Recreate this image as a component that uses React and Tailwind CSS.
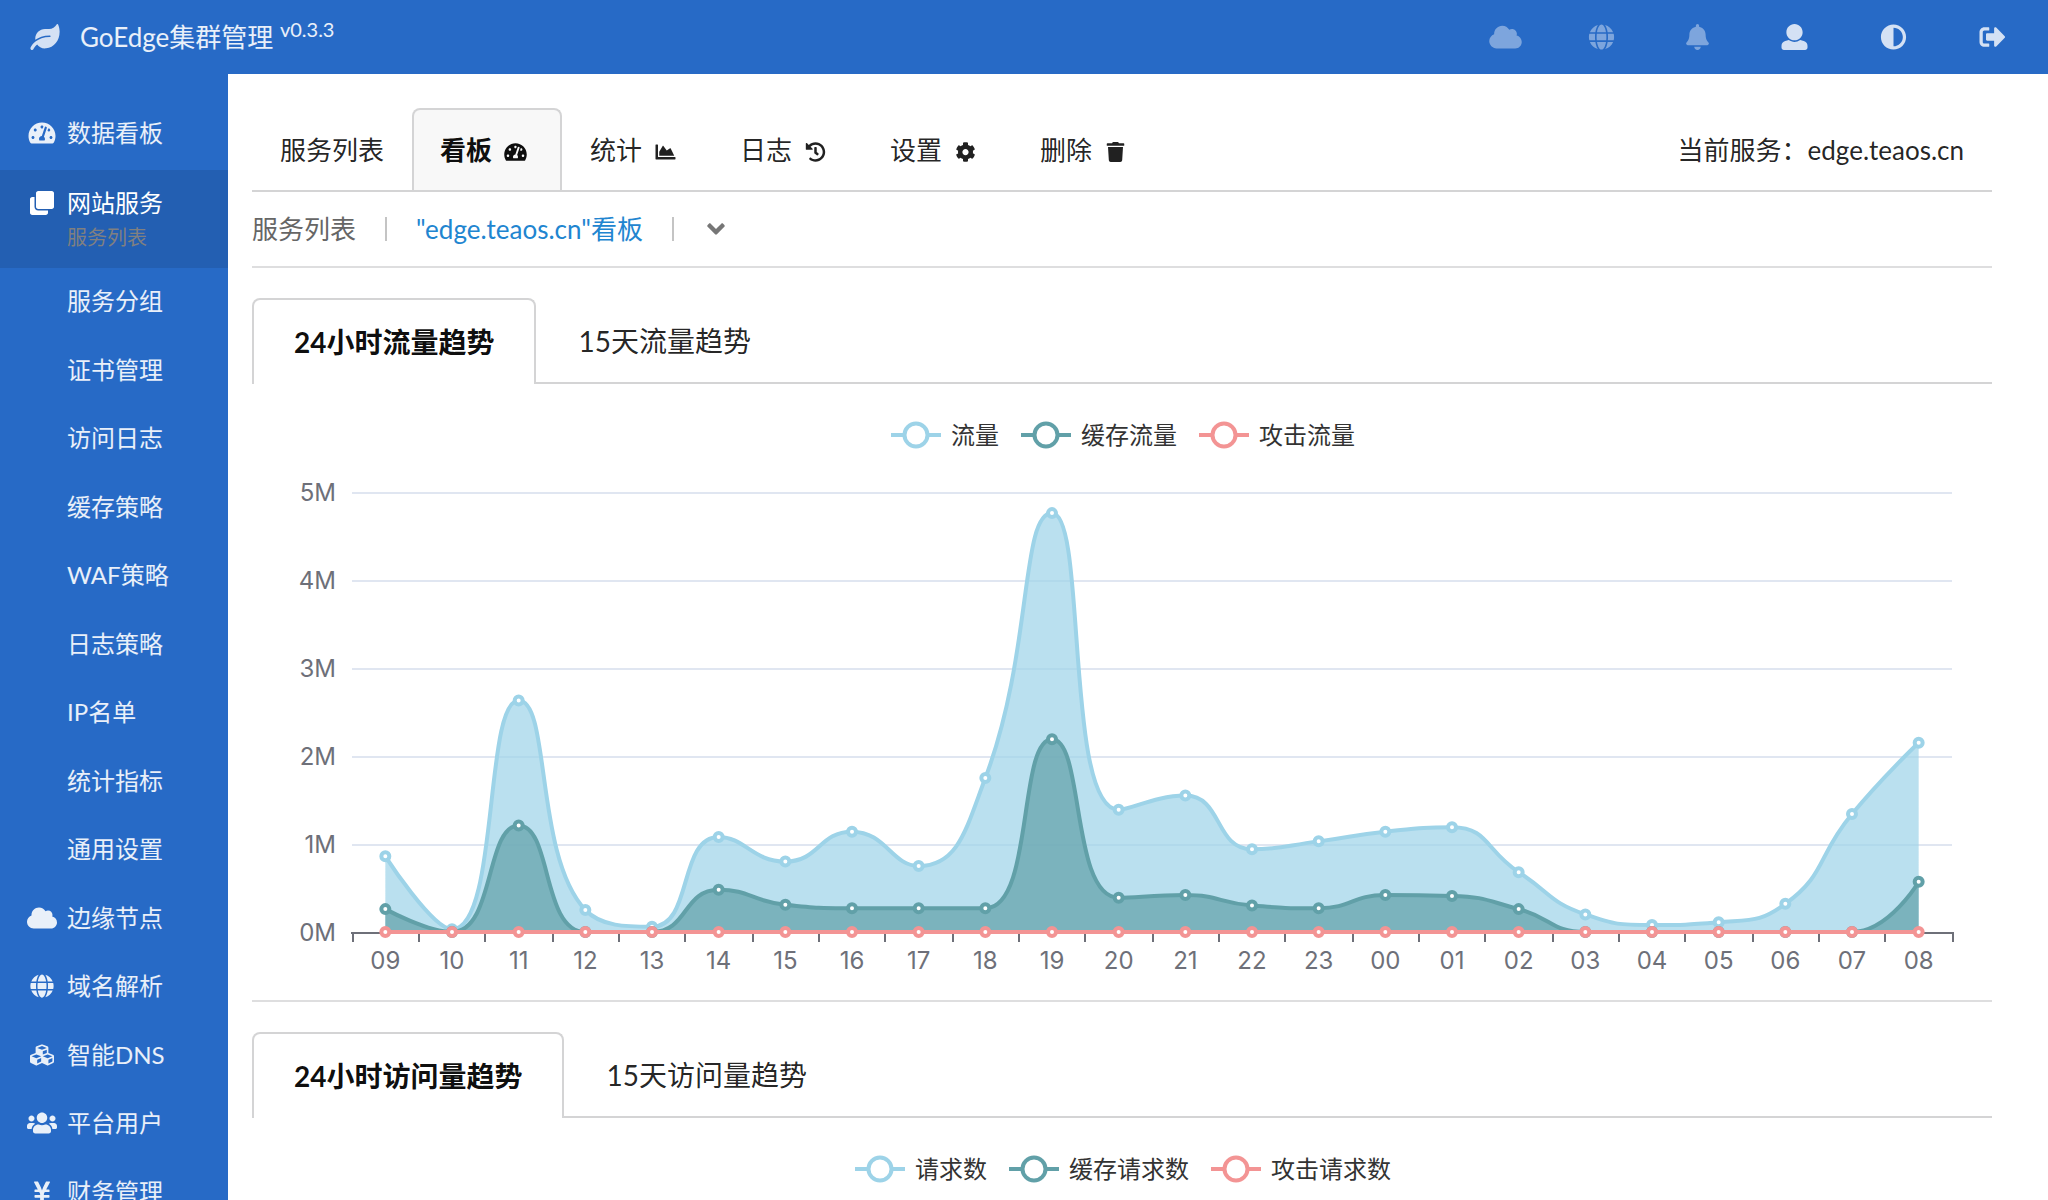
import {
  FaAdjust,
  FaAngleDown,
  FaBell,
  FaChartArea,
  FaClone,
  FaCloud,
  FaCog,
  FaCubes,
  FaGlobe,
  FaHistory,
  FaLeaf,
  FaSignOutAlt,
  FaTachometerAlt,
  FaTrash,
  FaUsers,
  FaYenSign,
} from "react-icons/fa";

const SERVICE_MENU = [
  "服务分组",
  "证书管理",
  "访问日志",
  "缓存策略",
  "WAF策略",
  "日志策略",
  "IP名单",
  "统计指标",
  "通用设置",
];

const MODULES = [
  { label: "边缘节点", icon: FaCloud },
  { label: "域名解析", icon: FaGlobe },
  { label: "智能DNS", icon: FaCubes },
  { label: "平台用户", icon: FaUsers },
  { label: "财务管理", icon: FaYenSign },
];

const TABS = [
  { label: "服务列表" },
  { label: "看板", icon: FaTachometerAlt, active: true },
  { label: "统计", icon: FaChartArea },
  { label: "日志", icon: FaHistory },
  { label: "设置", icon: FaCog },
  { label: "删除", icon: FaTrash },
];

const COLORS = ["#9dd3e8", "#61a0a8", "#f39494"];

const HOURS = [
  "09", "10", "11", "12", "13", "14", "15", "16", "17", "18", "19", "20",
  "21", "22", "23", "00", "01", "02", "03", "04", "05", "06", "07", "08",
];

// Values in M
const TRAFFIC = [
  0.86, 0.03, 2.63, 0.25, 0.06, 1.08, 0.8, 1.14, 0.75, 1.75, 4.76, 1.39,
  1.55, 0.94, 1.03, 1.14, 1.19, 0.68, 0.2, 0.08, 0.11, 0.32, 1.34, 2.15,
];
const CACHED = [
  0.26, 0, 1.21, 0, 0, 0.48, 0.31, 0.27, 0.27, 0.27, 2.19, 0.39,
  0.42, 0.3, 0.27, 0.42, 0.41, 0.26, 0, 0, 0, 0, 0, 0.57,
];
const ATTACKS = HOURS.map(() => 0);

const PLOT = { left: 100, right: 1700, top: 37, bottom: 477, max: 5 };

const clamp = (v, a, b) => Math.max(Math.min(v, Math.max(a, b)), Math.min(a, b));

function toPoints(values) {
  const step = (PLOT.right - PLOT.left) / values.length;
  const unit = (PLOT.bottom - PLOT.top) / PLOT.max;
  return values.map((v, i) => [PLOT.left + step * (i + 0.5), PLOT.bottom - 1 - v * unit]);
}

// Bezier smoothing that never overshoots the neighbouring points
function smoothPath(points, smooth = 0.5) {
  let [cx, cy] = points[0];
  let d = `M${cx},${cy}`;
  for (let i = 1; i < points.length; i++) {
    const [px, py] = points[i - 1];
    const [x, y] = points[i];
    let c1x = x;
    let c1y = y;
    let nextCx = x;
    let nextCy = y;
    if (i < points.length - 1) {
      const [nx, ny] = points[i + 1];
      const lenPrev = Math.hypot(x - px, y - py);
      const lenNext = Math.hypot(nx - x, ny - y);
      const ratio = lenNext / (lenNext + lenPrev);
      nextCx = clamp(x + (nx - px) * smooth * ratio, nx, x);
      nextCy = clamp(y + (ny - py) * smooth * ratio, ny, y);
      c1x = clamp(x - ((nextCx - x) * lenPrev) / lenNext, px, x);
      c1y = clamp(y - ((nextCy - y) * lenPrev) / lenNext, py, y);
      nextCx = x + ((x - c1x) * lenNext) / lenPrev;
      nextCy = y + ((y - c1y) * lenNext) / lenPrev;
    }
    d += `C${cx},${cy} ${c1x},${c1y} ${x},${y}`;
    cx = nextCx;
    cy = nextCy;
  }
  return d;
}

function UserIcon({ className }) {
  return (
    <svg viewBox="0 0 512 512" fill="currentColor" className={className} aria-hidden="true">
      <path d="M256 0c88.366 0 160 71.634 160 160s-71.634 160-160 160S96 248.366 96 160 167.634 0 256 0zm183.283 333.821l-71.313-17.828c-74.923 53.89-165.738 41.864-223.94 0l-71.313 17.828C29.981 344.505 0 382.903 0 426.955V464c0 26.51 21.49 48 48 48h416c26.51 0 48-21.49 48-48v-37.045c0-44.052-29.981-82.45-72.717-93.134z" />
    </svg>
  );
}

const HEADER_ACTIONS = [
  { label: "集群", icon: FaCloud, className: "w-24 text-white/40" },
  { label: "域名", icon: FaGlobe, className: "w-24 text-white/40" },
  { label: "消息", icon: FaBell, className: "w-24 text-white/40" },
  { label: "用户", icon: UserIcon, className: "w-[99px] text-white/80" },
  { label: "主题", icon: FaAdjust, className: "w-[99px] text-white/80" },
  { label: "退出", icon: FaSignOutAlt, className: "w-[99px] text-white/80" },
];

function Header() {
  return (
    <header className="flex h-[74px] shrink-0 items-center justify-between bg-[#276ac6] pr-1.5">
      <a href="#" className="flex items-center pl-[30px] text-white/90">
        <FaLeaf className="h-[26px] w-[30px] text-white/80" />
        <span className="ml-5 text-[26px] leading-9">
          GoEdge集群管理 <sup className="text-[20px]">v0.3.3</sup>
        </span>
      </a>
      <nav className="flex items-center">
        {HEADER_ACTIONS.map(({ label, icon: Icon, className }) => (
          <a key={label} href="#" aria-label={label} className={`flex justify-center ${className}`}>
            <Icon className="h-[26px] w-[33px]" />
          </a>
        ))}
      </nav>
    </header>
  );
}

function SidebarLink({ label, icon: Icon }) {
  return (
    <a href="#" className="flex h-full items-center text-white/90">
      <span className="mr-1 flex w-[63px] justify-center pl-5">
        {Icon && <Icon className="h-6 w-[30px] shrink-0" />}
      </span>
      {label}
    </a>
  );
}

function Sidebar() {
  return (
    <nav className="w-[228px] shrink-0 overflow-hidden bg-[#276ac6] pt-[22px] text-2xl leading-8">
      <div className="h-[74px]">
        <SidebarLink label="数据看板" icon={FaTachometerAlt} />
      </div>
      <a href="#" className="flex h-[98px] bg-[#235fb2] pt-[17px] text-white">
        <span className="mr-1 flex h-8 w-[63px] items-center justify-center pl-5">
          <FaClone className="h-6 w-[30px] shrink-0" />
        </span>
        <span>
          <span className="block">网站服务</span>
          <span className="block text-xl leading-9 text-[#808080]">服务列表</span>
        </span>
      </a>
      <ul className="-mt-px">
        {SERVICE_MENU.map((label) => (
          <li key={label} className="odd:h-[68px] even:h-[69px]">
            <SidebarLink label={label} />
          </li>
        ))}
        {MODULES.map((item) => (
          <li key={item.label} className="odd:h-[68px] even:h-[69px]">
            <SidebarLink {...item} />
          </li>
        ))}
      </ul>
    </nav>
  );
}

function MainTabs() {
  return (
    <div className="flex items-end justify-between border-b-2 border-[#d4d4d5] pt-[34px]">
      <nav className="flex">
        {TABS.map(({ label, icon: Icon, active }) => (
          <a
            key={label}
            href="#"
            className={`flex h-[82px] items-center rounded-t-lg border-2 border-b-0 px-[26px] ${
              active
                ? "border-[#d4d4d5] bg-[#f8f8f8] font-bold text-black/95"
                : "border-transparent text-black/87"
            }`}
          >
            {label}
            {Icon && (
              <span className="ml-2.5 mr-1.5 flex w-[26px] justify-center pt-1">
                <Icon className="h-5 w-[25px]" />
              </span>
            )}
          </a>
        ))}
      </nav>
      <div className="flex h-20 items-center pr-7 text-black/87">当前服务：edge.teaos.cn</div>
    </div>
  );
}

function Breadcrumb() {
  return (
    <div className="flex h-[76px] items-center border-b-2 border-[#dededf]">
      <a href="#" className="text-[#666]">服务列表</a>
      <span className="mx-[29px] h-6 w-0.5 bg-[#c4c4c4]" />
      <a href="#" className="text-[#2185d0]">"edge.teaos.cn"看板</a>
      <span className="mx-[29px] h-6 w-0.5 bg-[#c4c4c4]" />
      <button type="button" aria-label="更多" className="ml-1 text-[#767676]">
        <FaAngleDown className="h-7 w-[18px]" />
      </button>
    </div>
  );
}

function ChartTabs({ active, other }) {
  return (
    <div className="mt-[30px] flex text-[28px]">
      <button
        type="button"
        className="h-[86px] rounded-t-lg border-2 border-b-0 border-[#d4d4d5] px-10 font-bold text-black/95"
      >
        {active}
      </button>
      <div className="flex-1 border-b-2 border-[#d4d4d5] pt-0.5">
        <button type="button" className="h-full px-[42px] text-black/87">
          {other}
        </button>
      </div>
    </div>
  );
}

function Legend({ items }) {
  return (
    <ul className="mt-[30px] flex h-[42px] items-center justify-center gap-[22px] pl-0.5 text-2xl text-[#333]">
      {items.map((label, i) => (
        <li key={label} className="flex items-center gap-2.5">
          <svg viewBox="0 0 50 28" className="h-7 w-[50px]" fill="#fff" stroke={COLORS[i]} strokeWidth="4">
            <path d="M0 14h50" />
            <circle cx="25" cy="14" r="11.5" />
          </svg>
          {label}
        </li>
      ))}
    </ul>
  );
}

function TrafficChart() {
  const { left, right, top, bottom, max } = PLOT;
  const step = (right - left) / HOURS.length;
  const rowHeight = (bottom - top) / max;
  const series = [TRAFFIC, CACHED, ATTACKS].map(toPoints);

  return (
    <svg
      viewBox="0 0 1740 544"
      className="block w-full font-[Inter,Arial,sans-serif] text-2xl"
      role="img"
      aria-label="24小时流量趋势"
    >
      {[5, 4, 3, 2, 1, 0].map((n) => {
        const y = bottom - n * rowHeight;
        return (
          <g key={n}>
            {n > 0 && <path d={`M${left} ${y}H${right}`} stroke="#e0e6f1" strokeWidth="2" />}
            <text x={left - 16} y={y + 8} textAnchor="end" fill="#6e7079">
              {n}M
            </text>
          </g>
        );
      })}

      <path d={`M${left - 1} ${bottom}H${right + 2}`} stroke="#6e7079" strokeWidth="2" />
      {[...HOURS, "end"].map((h, i) => (
        <path
          key={h}
          d={`M${2 * Math.floor((left + step * i) / 2) + 1} ${bottom}v9`}
          stroke="#6e7079"
          strokeWidth="2"
        />
      ))}
      {HOURS.map((h, i) => (
        <text key={h} x={left + step * (i + 0.5)} y={bottom + 36} textAnchor="middle" fill="#6e7079">
          {h}
        </text>
      ))}

      {series.map((points, i) => {
        const line = smoothPath(points);
        const [firstX] = points[0];
        const [lastX] = points[points.length - 1];
        return (
          <g key={COLORS[i]}>
            <path d={`${line}L${lastX},${bottom - 1}L${firstX},${bottom - 1}Z`} fill={COLORS[i]} fillOpacity="0.7" />
            <path d={line} fill="none" stroke={COLORS[i]} strokeWidth="4" />
            {points.map(([x, y]) => (
              <circle key={x} cx={x} cy={y} r="4" fill="#fff" stroke={COLORS[i]} strokeWidth="4" />
            ))}
          </g>
        );
      })}
    </svg>
  );
}

export default function App() {
  return (
    <div className="flex h-screen flex-col overflow-hidden bg-white font-[Lato,'Noto_Sans_CJK_SC',sans-serif]">
      <Header />
      <div className="flex min-h-0 flex-1">
        <Sidebar />
        <main className="min-w-0 flex-1 overflow-hidden pl-6 pr-14 text-[26px] leading-9">
          <MainTabs />
          <Breadcrumb />
          <ChartTabs active="24小时流量趋势" other="15天流量趋势" />
          <Legend items={["流量", "缓存流量", "攻击流量"]} />
          <TrafficChart />
          <hr className="border-t-2 border-[#dededf]" />
          <ChartTabs active="24小时访问量趋势" other="15天访问量趋势" />
          <Legend items={["请求数", "缓存请求数", "攻击请求数"]} />
        </main>
      </div>
    </div>
  );
}
